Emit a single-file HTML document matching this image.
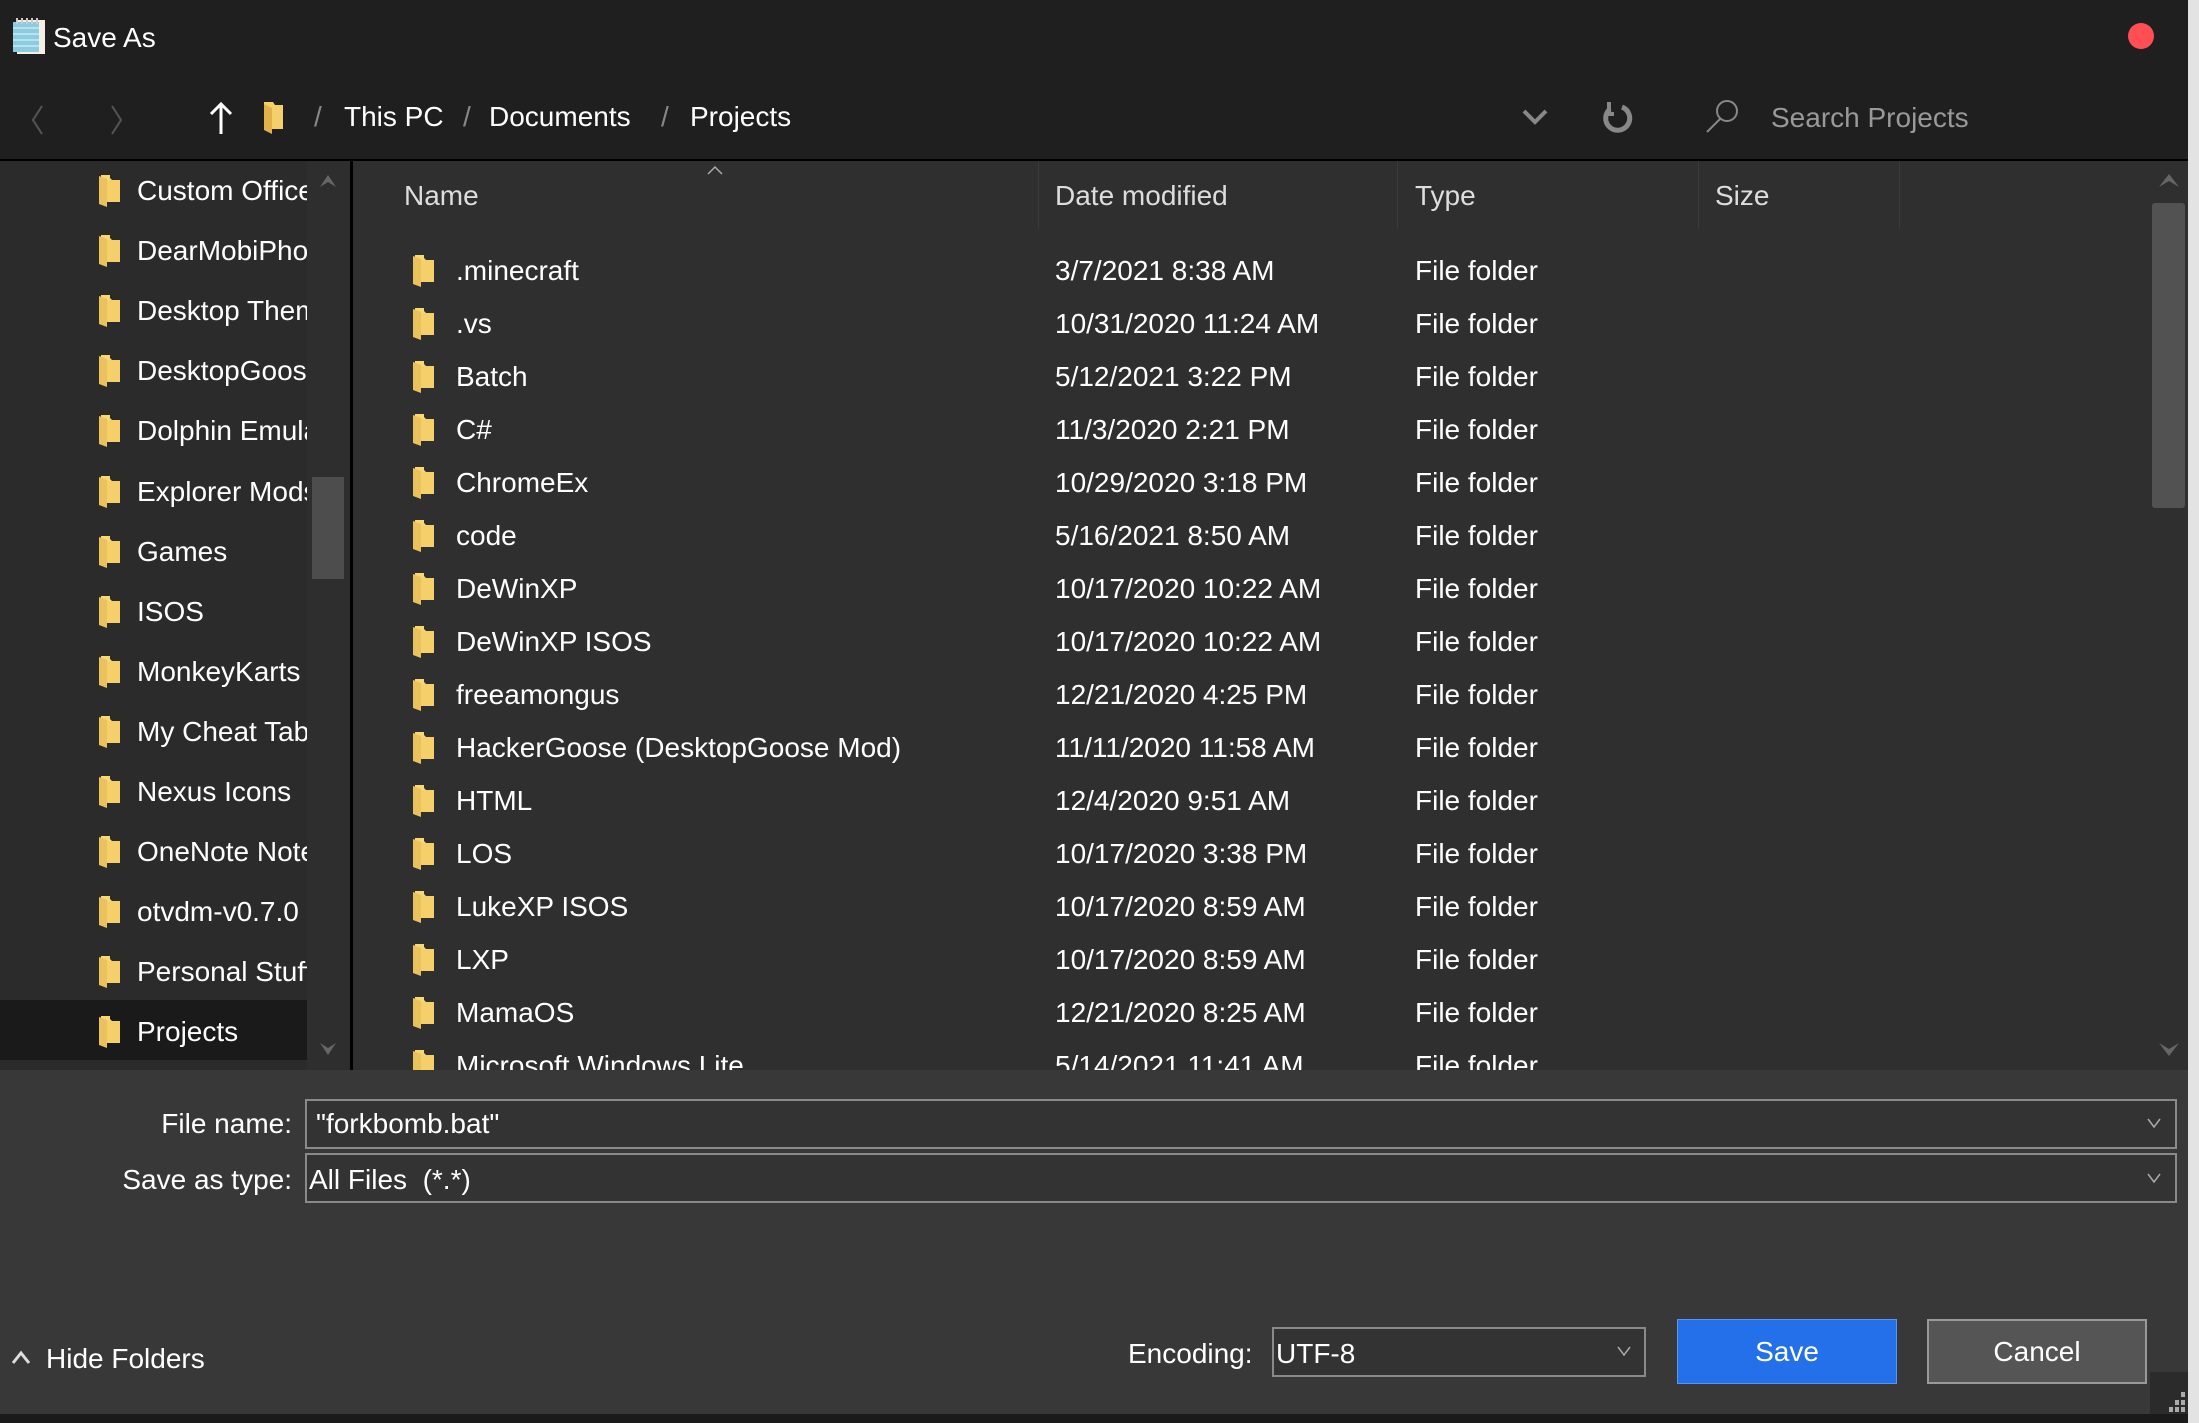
<!DOCTYPE html>
<html><head><meta charset="utf-8"><style>
*{margin:0;padding:0;box-sizing:border-box}
body{width:2199px;height:1423px;background:#e6e6e6;overflow:hidden;font-family:"Liberation Sans",sans-serif;color:#fff;position:relative}
.a{position:absolute;white-space:nowrap}
#win{position:absolute;left:0;top:0;width:2190px;height:1423px;background:#1f1f1f}
.f{position:absolute;width:24px;height:34px}
.t{font-size:28px;line-height:34px}
</style></head><body>
<div id="win">
<svg class="a" style="left:9px;top:16px" width="40" height="40" viewBox="0 0 40 40"><path d="M8 4h28v34H8z" fill="#f3efe4"/><path d="M4 6h26v30H4z" fill="#8ccbe0"/><path d="M4 12h26M4 18h26M4 24h26M4 30h26" stroke="#b9e2ef" stroke-width="2"/><path d="M8 2v6M13 2v6M18 2v6M23 2v6M28 2v6" stroke="#ccc" stroke-width="2"/></svg>
<div class="a t" style="left:53px;top:21px">Save As</div>
<div class="a" style="left:2128px;top:23px;width:26px;height:26px;border-radius:50%;background:#ff4f55"></div>
<svg class="a" style="left:28px;top:102px" width="20" height="36"><path d="M14 4L5 18L14 32" stroke="#555" stroke-width="2" fill="none"/></svg>
<svg class="a" style="left:106px;top:102px" width="20" height="36"><path d="M6 4L15 18L6 32" stroke="#555" stroke-width="2" fill="none"/></svg>
<svg class="a" style="left:208px;top:100px" width="26" height="36"><path d="M13 34V4M3 14L13 4L23 14" stroke="#fff" stroke-width="3" fill="none"/></svg>
<svg class="a" style="left:262px;top:100px" width="26" height="36"><path d="M2 2h9l2 3h8v24H2z" fill="#f5cf6a"/><path d="M2 4l8 4v26l-8-4z" fill="#e1b24a"/></svg>
<div class="a t" style="left:314px;top:100px;color:#888">/</div>
<div class="a t" style="left:344px;top:100px">This PC</div>
<div class="a t" style="left:463px;top:100px;color:#888">/</div>
<div class="a t" style="left:489px;top:100px">Documents</div>
<div class="a t" style="left:661px;top:100px;color:#888">/</div>
<div class="a t" style="left:690px;top:100px">Projects</div>
<svg class="a" style="left:1521px;top:106px" width="28" height="22"><path d="M3 5l11 11L25 5" stroke="#888" stroke-width="4" fill="none"/></svg>
<svg class="a" style="left:1600px;top:100px" width="34" height="34"><path d="M10 9A12 12 0 1 0 22 7" stroke="#888" stroke-width="5" fill="none"/><path d="M9 2v12h5" stroke="#888" stroke-width="4" fill="none"/></svg>
<svg class="a" style="left:1703px;top:98px" width="40" height="38"><circle cx="24" cy="13" r="10" stroke="#888" stroke-width="2" fill="none"/><path d="M17 21L4 34" stroke="#888" stroke-width="2"/></svg>
<div class="a t" style="left:1771px;top:101px;color:#999">Search Projects</div>
<div class="a" style="left:0;top:159px;width:2190px;height:2px;background:#000"></div>
<div class="a" style="left:0;top:161px;width:350px;height:909px;background:#2b2b2b;overflow:hidden">
<div class="a" style="left:0;top:839px;width:307px;height:60px;background:#1a1a1a"></div>
<div class="a" style="left:307px;top:0;width:43px;height:909px;background:#2e2e2e"></div>
<svg class="a" style="left:318px;top:10px" width="20" height="20"><path d="M2 16L10 4L18 16L10 11z" fill="#666"/></svg>
<svg class="a" style="left:318px;top:878px" width="20" height="20"><path d="M2 4L10 16L18 4L10 9z" fill="#666"/></svg>
<div class="a" style="left:312px;top:316px;width:32px;height:102px;background:#4d4d4d"></div>
<div class="a" style="left:0;top:0;width:307px;height:909px;overflow:hidden" id="lp"></div>
</div>
<div class="a" style="left:350px;top:161px;width:3px;height:909px;background:#000"></div>
<div class="a" style="left:353px;top:161px;width:1837px;height:909px;background:#2f2f2f;overflow:hidden" id="lst">
<svg class="a" style="left:352px;top:2px" width="20" height="14"><path d="M3 11L10 4L17 11" stroke="#aaa" stroke-width="1.5" fill="none"/></svg>
<div class="a t" style="left:51px;top:18px;color:#ddd">Name</div>
<div class="a" style="left:685px;top:0;width:1px;height:68px;background:#3a3a3a"></div>
<div class="a t" style="left:702px;top:18px;color:#ddd">Date modified</div>
<div class="a" style="left:1044px;top:0;width:1px;height:68px;background:#3a3a3a"></div>
<div class="a t" style="left:1062px;top:18px;color:#ddd">Type</div>
<div class="a" style="left:1345px;top:0;width:1px;height:68px;background:#3a3a3a"></div>
<div class="a t" style="left:1362px;top:18px;color:#ddd">Size</div>
<div class="a" style="left:1546px;top:0;width:1px;height:68px;background:#3a3a3a"></div>
<svg class="a" style="left:1804px;top:10px" width="24" height="20"><path d="M2 16L12 3L22 16L12 10z" fill="#666"/></svg>
<div class="a" style="left:1799px;top:42px;width:33px;height:305px;background:#525252;border-radius:3px"></div>
<svg class="a" style="left:1804px;top:878px" width="24" height="20"><path d="M2 4L12 17L22 4L12 10z" fill="#666"/></svg>
</div>
<div class="a" style="left:0;top:1070px;width:2190px;height:344px;background:#383838"></div>
<div class="a" style="left:0;top:1414px;width:2190px;height:9px;background:#1a1a1a"></div>
<div class="a t" style="right:1898px;top:1107px">File name:</div>
<div class="a" style="left:305px;top:1099px;width:1872px;height:50px;border:2px solid #8a8a8a;background:#333"></div>
<div class="a t" style="left:316px;top:1107px">"forkbomb.bat"</div>
<svg class="a" style="left:2146px;top:1116px" width="16" height="14"><path d="M2 3L8 11L14 3" stroke="#aaa" stroke-width="1.5" fill="none"/></svg>
<div class="a t" style="right:1898px;top:1163px">Save as type:</div>
<div class="a" style="left:305px;top:1153px;width:1872px;height:50px;border:2px solid #8a8a8a;background:#333"></div>
<div class="a t" style="left:309px;top:1163px">All Files&nbsp; (*.*)</div>
<svg class="a" style="left:2146px;top:1171px" width="16" height="14"><path d="M2 3L8 11L14 3" stroke="#aaa" stroke-width="1.5" fill="none"/></svg>
<svg class="a" style="left:10px;top:1348px" width="22" height="20"><path d="M3 15L11 5L19 15" stroke="#ddd" stroke-width="3" fill="none"/></svg>
<div class="a t" style="left:46px;top:1342px">Hide Folders</div>
<div class="a t" style="left:1128px;top:1337px">Encoding:</div>
<div class="a" style="left:1272px;top:1327px;width:374px;height:50px;border:2px solid #8a8a8a;background:#333"></div>
<div class="a t" style="left:1276px;top:1337px">UTF-8</div>
<svg class="a" style="left:1616px;top:1344px" width="16" height="14"><path d="M2 3L8 11L14 3" stroke="#aaa" stroke-width="1.5" fill="none"/></svg>
<div class="a t" style="left:1677px;top:1319px;width:220px;height:65px;background:#2370ea;border:1px solid #5a95f0;text-align:center;line-height:63px">Save</div>
<div class="a t" style="left:1927px;top:1319px;width:220px;height:65px;background:#555;border:2px solid #999;text-align:center;line-height:61px">Cancel</div>
<div class="a" style="left:2150px;top:1372px;width:40px;height:42px;background:#2b2b2b"></div>
<div class="a" style="left:2181px;top:1392px;width:4px;height:5px;background:#aaa"></div>
<div class="a" style="left:2175px;top:1400px;width:4px;height:5px;background:#aaa"></div><div class="a" style="left:2181px;top:1400px;width:4px;height:5px;background:#aaa"></div>
<div class="a" style="left:2169px;top:1407px;width:4px;height:5px;background:#aaa"></div><div class="a" style="left:2175px;top:1407px;width:4px;height:5px;background:#aaa"></div><div class="a" style="left:2181px;top:1407px;width:4px;height:5px;background:#aaa"></div>
</div>
<div class="a" style="left:2188px;top:0;width:11px;height:1423px;background:#e3e3e3"></div>
<script>
function fold(x,y){return '<svg class="f" style="left:'+x+'px;top:'+y+'px" viewBox="0 0 24 34"><path d="M3 1h9v3l2 2h1v21H3z" fill="#f8d775"/><path d="M8 6h14v22H8z" fill="#f5cf6a"/><path d="M1 2l8 3v28l-8-3z" fill="#e9c25d"/></svg>';}
var L=["Custom Office Templates","DearMobiPhone","Desktop Themes","DesktopGoose","Dolphin Emulator","Explorer Mods","Games","ISOS","MonkeyKarts","My Cheat Tables","Nexus Icons","OneNote Notebooks","otvdm-v0.7.0","Personal Stuff","Projects"];
var h='';L.forEach(function(n,i){var y=13+i*60.1;h+=fold(98,y)+'<div class="a t" style="left:137px;top:'+y+'px">'+n+'</div>';});
document.getElementById('lp').innerHTML=h;
var R=[[".minecraft","3/7/2021 8:38 AM"],[".vs","10/31/2020 11:24 AM"],["Batch","5/12/2021 3:22 PM"],["C#","11/3/2020 2:21 PM"],["ChromeEx","10/29/2020 3:18 PM"],["code","5/16/2021 8:50 AM"],["DeWinXP","10/17/2020 10:22 AM"],["DeWinXP ISOS","10/17/2020 10:22 AM"],["freeamongus","12/21/2020 4:25 PM"],["HackerGoose (DesktopGoose Mod)","11/11/2020 11:58 AM"],["HTML","12/4/2020 9:51 AM"],["LOS","10/17/2020 3:38 PM"],["LukeXP ISOS","10/17/2020 8:59 AM"],["LXP","10/17/2020 8:59 AM"],["MamaOS","12/21/2020 8:25 AM"],["Microsoft Windows Lite","5/14/2021 11:41 AM"]];
var g='';R.forEach(function(r,i){var y=93+i*53;g+=fold(59,y)+'<div class="a t" style="left:103px;top:'+y+'px">'+r[0]+'</div><div class="a t" style="left:702px;top:'+y+'px">'+r[1]+'</div><div class="a t" style="left:1062px;top:'+y+'px">File folder</div>';});
document.getElementById('lst').insertAdjacentHTML('beforeend',g);
</script>
</body></html>
